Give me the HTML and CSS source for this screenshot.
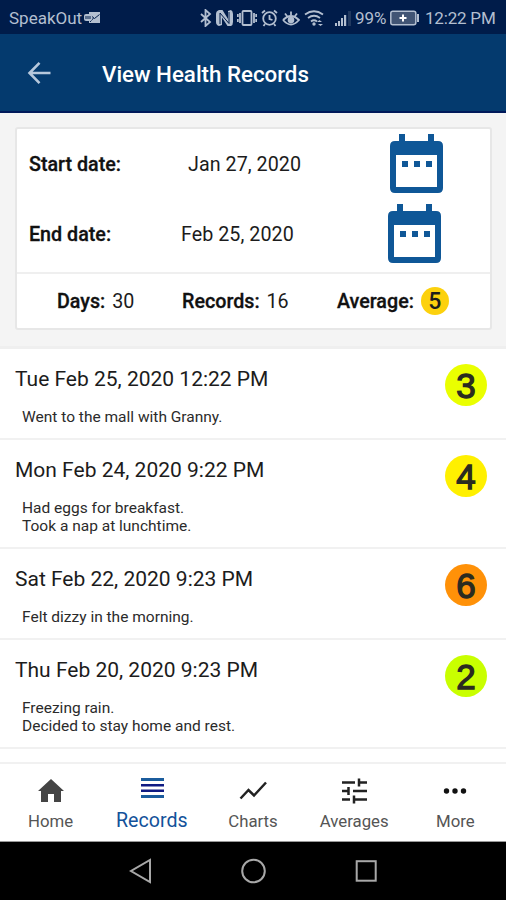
FILE: index.html
```html
<!DOCTYPE html>
<html lang="en">
<head>
<meta charset="utf-8">
<title>View Health Records</title>
<link rel="stylesheet" href="styles.css">
</head>
<body>
<div class="status">
  <span class="carrier">SpeakOut</span>
  <svg class="mail" width="17" height="14" viewBox="0 0 17 14"><path class="fill" d="M5 1h11v11H5z"/><path class="cut" d="M5.500 3.500l5 4 5-4M6 11l3.500-4"/><rect class="fill" y="3" width="8" height="7" rx="2"/><path class="cut" d="M2 5v3M4 5v3M6 5v3"/></svg>
  <div class="tray">
    <svg width="12" height="18" viewBox="0 0 12 18"><path class="line" d="M1 5l9 8-4.500 4V1L10 5l-9 8"/></svg>
    <svg width="17" height="18" viewBox="0 0 17 18"><path class="fill" d="M3 1h3.500l5.500 9V2l3-1q2 1 2 4v8q0 3-2 4h-3.500L6 8.500V16l-3 1q-3-1-3-4V5q0-3 3-4z"/><path class="cut" d="M4 15V4l9 10.500V3"/></svg>
    <svg width="20" height="18" viewBox="0 0 20 18"><rect class="line" x="5.500" y="2" width="9" height="14" rx="1"/><path class="line" d="M3 4v10M.8 5v3M.8 10v3M17 4v10M19.200 5v3M19.200 10v3"/></svg>
    <svg width="17" height="18" viewBox="0 0 17 18"><circle class="line" cx="8.500" cy="9.500" r="6.300"/><path class="line" d="M8.500 6v4l3 1M1 4l3-2.500M16 4l-3-2.500M4 15l-1.500 2M13 15l1.500 2"/></svg>
    <svg width="18" height="18" viewBox="0 0 18 18"><path class="line" d="M1 11q8-8 16 0-8 9-16 0M3 4.500l2 2.500M9 2.500V6M15 4.500L13 7"/><circle class="fill" cx="9" cy="11" r="3.300"/></svg>
    <svg width="20" height="18" viewBox="0 0 20 18"><path class="line" d="M1 5.500q9-6.500 18 0M4 9q6-4.500 12 0M7 12.500q3-2.500 6 0"/><circle class="fill" cx="10" cy="15" r="1.700"/><path class="fill" d="M13 13l2.500-2 2.500 2zM14 15h5l-2.500 2z"/></svg>
    <svg class="signal" width="16" height="18" viewBox="0 0 16 18"><path class="fill" d="M0 14h2v3H0zM3 12h2v5H3zM6 9h2v8H6zM9 6h2.200v11H9z"/><path class="dim" d="M13 2h3v15h-3z"/></svg>
    <span class="percent">99%</span>
    <svg class="battery" width="30" height="18" viewBox="0 0 30 18"><rect class="cell" x=".8" y="2.300" width="25" height="13.400" rx="2"/><path class="fill" d="M27 5h2v8h-2z"/><path class="plus" d="M13 5.500v7M9.500 9h7"/></svg>
    <span class="clock">12:22 PM</span>
  </div>
</div>
<header class="appbar">
  <svg width="24" height="24" viewBox="0 0 24 24"><path d="M12.500 1.800L2.500 12l10 10.200M2.500 12h21"/></svg>
  <h1>View Health Records</h1>
</header>
<section class="summary">
  <div class="card">
    <div class="date">
      <b>Start date:</b><span class="value">Jan 27, 2020</span>
      <svg width="54" height="60" viewBox="0 0 54 60"><path class="blue" fill-rule="evenodd" d="M9 0h6v7h23V0h6v7h4q5 0 5 5v42q0 5-5 5H5q-5 0-5-5V12q0-5 5-5h4zM6 21v32h41V21z"/><path class="blue" d="M12 27h6v6h-6zM24 27h6v6h-6zM36 27h6v6h-6z"/></svg>
    </div>
    <div class="date second">
      <b>End date:</b><span class="value">Feb 25, 2020</span>
      <svg width="54" height="60" viewBox="0 0 54 60"><path class="blue" fill-rule="evenodd" d="M9 0h6v7h23V0h6v7h4q5 0 5 5v42q0 5-5 5H5q-5 0-5-5V12q0-5 5-5h4zM6 21v32h41V21z"/><path class="blue" d="M12 27h6v6h-6zM24 27h6v6h-6zM36 27h6v6h-6z"/></svg>
    </div>
    <div class="totals">
      <span class="days"><b>Days:</b> <span class="count">30</span></span>
      <span class="records"><b>Records:</b> <span class="count">16</span></span>
      <span class="average"><b>Average:</b><i class="score">5</i></span>
    </div>
  </div>
</section>
<main>
  <article><h2>Tue Feb 25, 2020 12:22 PM</h2><p>Went to the mall with Granny.</p><i class="level l3">3</i></article>
  <article><h2>Mon Feb 24, 2020 9:22 PM</h2><p>Had eggs for breakfast.<br>Took a nap at lunchtime.</p><i class="level l4">4</i></article>
  <article><h2>Sat Feb 22, 2020 9:23 PM</h2><p>Felt dizzy in the morning.</p><i class="level l6">6</i></article>
  <article><h2>Thu Feb 20, 2020 9:23 PM</h2><p>Freezing rain.<br>Decided to stay home and rest.</p><i class="level l2">2</i></article>
</main>
<nav class="tabs">
  <a><svg width="28" height="28" viewBox="0 0 28 28"><path fill="#444" d="M14 2L1 14h3v11h7v-8h6v8h7V14h3z"/></svg><span>Home</span></a>
  <a class="active"><svg width="28" height="28" viewBox="0 0 28 28"><path fill="#1b5c9d" d="M3 1h23v3H3zM3 18h23v3H3z"/><path fill="#101b83" d="M3 7h23v2.500H3zM3 12.500h23V15H3z"/></svg><span>Records</span></a>
  <a><svg width="28" height="28" viewBox="0 0 28 28"><path class="stroke" d="M1.500 21.500l8-8.500 5.500 5.500L27 5.500"/></svg><span>Charts</span></a>
  <a><svg width="28" height="28" viewBox="0 0 28 28"><path class="stroke" d="M2 5.500h13M19 1.500v8M19 5.500h8M2 14h7M8.500 10v8M13 14h14M2 22.500h8M14 18.500v8M14 22.500h13"/></svg><span>Averages</span></a>
  <a><svg width="28" height="28" viewBox="0 0 28 28"><g fill="#111"><circle cx="5.500" cy="14" r="2.700"/><circle cx="14" cy="14" r="2.700"/><circle cx="22.500" cy="14" r="2.700"/></g></svg><span>More</span></a>
</nav>
<footer class="system">
  <svg width="24" height="26" viewBox="0 0 24 26"><path d="M21 2v22L2 13z"/></svg>
  <svg width="26" height="26" viewBox="0 0 26 26"><circle cx="12.500" cy="13" r="11.300"/></svg>
  <svg width="24" height="26" viewBox="0 0 24 26"><rect x="1.700" y="3.200" width="19" height="19.500"/></svg>
</footer>
</body>
</html>
```
FILE: styles.css
```css
* { box-sizing: border-box; }
body {
  margin: 0;
  width: 506px;
  height: 900px;
  overflow: hidden;
  display: flex;
  flex-direction: column;
  background: #fff;
  color: #1c1c1c;
  font-family: Roboto, sans-serif;
  white-space: nowrap;
}
svg { display: block; flex: none; }
i { font-style: normal; }

.status {
  height: 34px;
  flex: none;
  display: flex;
  align-items: center;
  padding: 2px 10px 0 9px;
  background: #001c4a;
  color: #b3bfd0;
  font-size: 17px;
}
.carrier { width: 75px; }
.tray { margin-left: auto; display: flex; align-items: center; gap: 4px; }
.fill { fill: #b3bfd0; }
.dim { fill: #21395f; }
.line { fill: none; stroke: #b3bfd0; stroke-width: 1.8; }
.cut { fill: none; stroke: #001c4a; stroke-width: 1; }
.cell { fill: #415575; stroke: #b3bfd0; stroke-width: 1.5; }
.plus { stroke: #fff; stroke-width: 2; }
.signal { margin-left: 7px; }
.clock { width: 71px; margin-left: 1px; letter-spacing: -.2px; }
.percent { width: 31px; letter-spacing: -.1px; }

.appbar {
  height: 79px;
  flex: none;
  display: flex;
  align-items: center;
  padding-left: 27px;
  background: #043a6e;
  border-bottom: 2px solid #00195a;
}
.appbar path { fill: none; stroke: #b7c8dc; stroke-width: 2.6; }
.appbar h1 {
  margin: 2px 0 0 51px;
  color: #fff;
  font-size: 22.3px;
  font-weight: 500;
}

.summary {
  height: 236px;
  flex: none;
  padding: 14px 14px 0 15px;
  background: #f4f4f4;
  border-bottom: 3px solid #efefef;
}
.card {
  height: 203px;
  background: #fff;
  border: 2px solid #e7e7e7;
  border-radius: 3px;
  font-size: 19.700px;
}
b { font-weight: 500; color: #111; -webkit-text-stroke: .3px #111; }
.date {
  height: 70px;
  display: grid;
  grid-template-columns: 159px 202px 54px;
  padding: 0 0 0 12px;
  align-items: center;
}
.date svg { margin-top: -1px; }
.value { letter-spacing: .05px; }
.second { height: 75px; grid-template-columns: 152px 207px 54px; border-bottom: 2px solid #efefef; }
.second svg { margin-top: -3px; }
.second b, .second .value { padding-bottom: 3px; }
.blue { fill: #0f5797; }
.totals { height: 54px; display: flex; align-items: center; padding-left: 40px; }
.count { margin-left: 2px; }
.days { width: 125px; }
.records { width: 155px; }
.average { display: flex; align-items: center; }
.score {
  width: 28px;
  height: 28px;
  margin-left: 7px;
  border-radius: 50%;
  background: #fcd10d;
  text-align: center;
  font-size: 23px;
  line-height: 29px;
  font-weight: 500;
}

main { flex: none; height: 413px; }
article {
  display: grid;
  grid-template-columns: 430px 42px;
  grid-template-rows: auto auto;
  padding: 15px 0 12px 15px;
  border-bottom: 2px solid #f1f1f1;
}
h2 { margin: 0; font-size: 21px; font-weight: 400; line-height: 30px; }
p { margin: 14px 0 0 7px; font-size: 15.5px; line-height: 18px; color: #2b2b2b; }
.level {
  grid-column: 2;
  grid-row: 1 / 3;
  width: 42px;
  height: 42px;
  border-radius: 50%;
  text-align: center;
  font: 35px/43px "Liberation Sans", sans-serif;
  color: #2a2b20;
  -webkit-text-stroke: 1.3px #2a2b20;
}
.l3 { background: #eaff00; }
.l4 { background: #fff000; }
.l6 { background: #ff9108; }
.l2 { background: #c9ff00; }

.tabs {
  height: 80px;
  flex: none;
  display: grid;
  grid-template-columns: repeat(5, 1fr);
  border-top: 2px solid #f1f1f1;
  border-bottom: 1px solid #999;
}
.tabs a {
  display: flex;
  flex-direction: column;
  align-items: center;
  padding-top: 13px;
  font-size: 16.800px;
  line-height: 22px;
  color: #555;
}
.tabs span { margin-top: 5px; }
.tabs .active { color: #13529a; font-size: 19.600px; }
.stroke { fill: none; stroke: #222; stroke-width: 2.5; }

.system {
  flex: 1;
  display: flex;
  align-items: center;
  padding: 0 0 0 129px;
  background: #000;
}
.system svg { margin-right: 88px; }
.system * { fill: none; stroke: #a8a8a8; stroke-width: 2; }
```
